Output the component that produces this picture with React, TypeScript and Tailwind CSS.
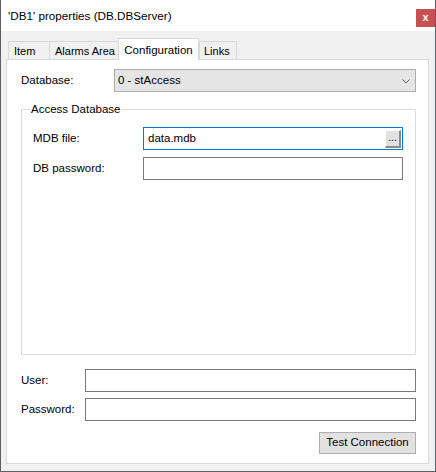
import React, { useState } from "react";

const font = { fontFamily: '"Liberation Sans", Arial, sans-serif' };

function Tab({ label, width, pad, active, last, onClick }: {
  label: string;
  width: string;
  pad: string;
  active?: boolean;
  last?: boolean;
  onClick: () => void;
}) {
  if (active) {
    return (
      <div
        onClick={onClick}
        className={`${width} h-[22px] -mb-px bg-white border-l border-t border-r border-[#d9d9d9] flex items-start justify-center pt-[3px] relative z-10 cursor-default`}
      >
        {label}
      </div>
    );
  }
  return (
    <div
      onClick={onClick}
      className={`${width} ${pad} h-[18px] bg-[#f0f0f0] border-t border-l ${last ? "border-r" : ""} border-[#d9d9d9] flex items-center pt-[1px] cursor-default whitespace-nowrap text-[11px]`}
    >
      {label}
    </div>
  );
}

export default function App() {
  const [tab, setTab] = useState("Configuration");
  const [mdb, setMdb] = useState("data.mdb");
  const [dbPass, setDbPass] = useState("");
  const [user, setUser] = useState("");
  const [password, setPassword] = useState("");

  return (
    <div
      style={font}
      className="w-[436px] h-[472px] bg-[#f0f0f0] border-l border-r border-b border-[#5a6066] flex flex-col text-[11.5px] text-black select-none"
    >
      {/* title bar */}
      <div className="h-[31px] bg-white flex items-start justify-between shrink-0">
        <div className="pl-[7px] pt-[8px] text-[11.7px] leading-[16px]">'DB1' properties (DB.DBServer)</div>
        <div className="mt-[9px] w-[19px] h-[18px] bg-[#c75050] text-white flex items-center justify-center text-[11px] font-bold leading-none pb-[1px]">
          x
        </div>
      </div>

      <div className="pl-[5px] pr-[6px] pt-[7px] flex flex-col">
        {/* tabs */}
        <div className="flex items-end pl-[2px] h-[21px]">
          <Tab label="Item" width="w-[41px]" pad="pl-[5px]" active={tab === "Item"} onClick={() => setTab("Item")} />
          <Tab label="Alarms Area" width="w-[69px]" pad="pl-[5px]" active={tab === "Alarms Area"} onClick={() => setTab("Alarms Area")} />
          <Tab label="Configuration" width="w-[81px]" pad="pl-[7px]" active={tab === "Configuration"} onClick={() => setTab("Configuration")} />
          <Tab label="Links" width="w-[38px]" pad="pl-[4px]" last active={tab === "Links"} onClick={() => setTab("Links")} />
        </div>

        {/* panel */}
        <div className="h-[405px] bg-white border border-[#d9d9d9] pl-[14px] pr-[12px] pt-[9px] flex flex-col">
          <div className="flex items-center h-[23px]">
            <div className="w-[93px]">Database:</div>
            <div className="flex-1 h-[23px] bg-[#e5e5e5] border border-[#adadad] flex items-center justify-between pl-[3px] pr-[5px]">
              <span>0 - stAccess</span>
              <svg width="8" height="5" viewBox="0 0 8 5" className="mt-[1px]">
                <polyline points="0.5,0.5 4,4 7.5,0.5" fill="none" stroke="#606060" strokeWidth="1" />
              </svg>
            </div>
          </div>

          {/* group box */}
          <div className="mt-[17px] h-[246px] border border-[#dcdcdc] flex flex-col pl-[11px] pr-[12px]">
            <span className="-mt-[9px] -ml-[3px] px-[1px] bg-white w-fit leading-[16px]">Access Database</span>

            <div className="flex items-center mt-[10px]">
              <div className="w-[110px]">MDB file:</div>
              <div className="flex-1 h-[23px] border border-[#0078d7] bg-white flex items-center pl-[4px] pr-[1px]">
                <input
                  value={mdb}
                  onChange={(e) => setMdb(e.target.value)}
                  className="flex-1 min-w-0 outline-none bg-transparent"
                />
                <div className="w-[16px] h-[18px] bg-[#e1e1e1] border-t border-l border-white border-r-2 border-b-2 border-r-[#8a8a8a] border-b-[#8a8a8a] flex items-end justify-center text-[10px] leading-[12px] pb-[2px]">
                  ...
                </div>
              </div>
            </div>

            <div className="flex items-center mt-[7px]">
              <div className="w-[110px]">DB password:</div>
              <input
                type="password"
                value={dbPass}
                onChange={(e) => setDbPass(e.target.value)}
                className="flex-1 h-[23px] border border-[#7a7a7a] bg-white outline-none px-[4px]"
              />
            </div>
          </div>

          {/* credentials */}
          <div className="flex items-center mt-[14px]">
            <div className="w-[64px]">User:</div>
            <input
              value={user}
              onChange={(e) => setUser(e.target.value)}
              className="flex-1 h-[23px] border border-[#7a7a7a] bg-white outline-none px-[4px]"
            />
          </div>
          <div className="flex items-center mt-[6px]">
            <div className="w-[64px]">Password:</div>
            <input
              type="password"
              value={password}
              onChange={(e) => setPassword(e.target.value)}
              className="flex-1 h-[23px] border border-[#7a7a7a] bg-white outline-none px-[4px]"
            />
          </div>

          <div className="flex justify-end mt-[11px]">
            <button className="w-[97px] h-[22px] bg-[#e1e1e1] border border-[#adadad] flex items-center justify-center">
              Test Connection
            </button>
          </div>
        </div>
      </div>
    </div>
  );
}
